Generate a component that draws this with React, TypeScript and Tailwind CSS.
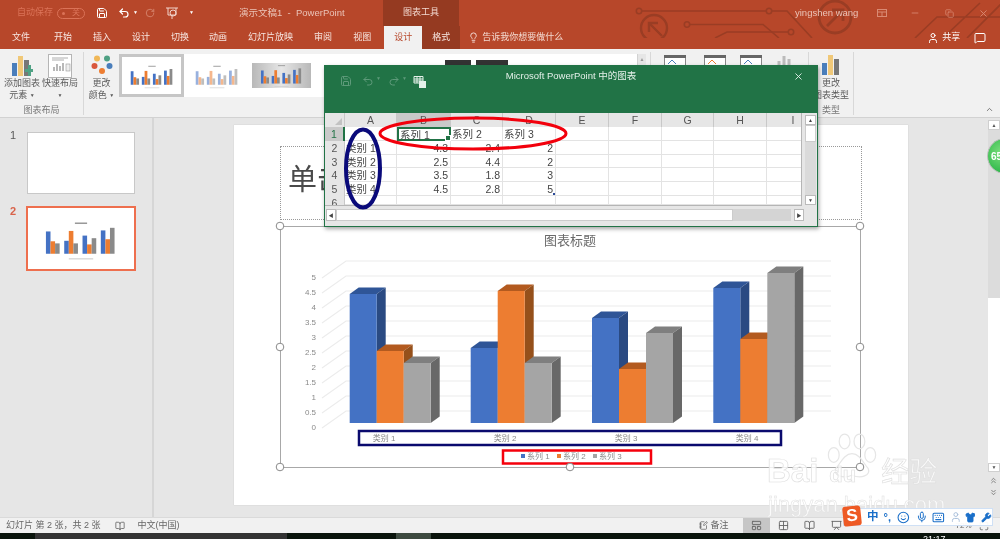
import React from "react";
import { Save, Undo2, Redo2, RotateCw, X, Lightbulb, User, MessageSquare, ChevronUp, Minus, Copy, Smile, Mic, Keyboard, Shirt, Wrench, ChevronsUp, ChevronsDown, NotebookPen, Grid2x2, BookOpen, Presentation, LayoutPanelTop, Maximize } from "lucide-react";

const BLUE = { f: "#4472C4", t: "#2F5597", s: "#2A4A82" };
const ORANGE = { f: "#ED7D31", t: "#B35A1F", s: "#95501B" };
const GRAY = { f: "#A5A5A5", t: "#7F7F7F", s: "#686868" };

function Bar3D({ x, v, c }: { x: number; v: number; c: { f: string; t: string; s: string } }) {
  const h = v * 30;
  const y = 423 - h;
  return (
    <g>
      <polygon points={`${x},${y} ${x + 9},${y - 6.5} ${x + 36},${y - 6.5} ${x + 27},${y}`} fill={c.t} />
      <polygon points={`${x + 27},${y} ${x + 36},${y - 6.5} ${x + 36},416.5 ${x + 27},423`} fill={c.s} />
      <rect x={x} y={y} width={27} height={h} fill={c.f} />
    </g>
  );
}

function Chart() {
  const groups = [
    { x: 350.7, v: [4.3, 2.4, 2], label: "类别 1", cx: 385 },
    { x: 471.7, v: [2.5, 4.4, 2], label: "类别 2", cx: 506 },
    { x: 593, v: [3.5, 1.8, 3], label: "类别 3", cx: 627 },
    { x: 714.3, v: [4.5, 2.8, 5], label: "类别 4", cx: 748 },
  ];
  const ticks = ["0", "0.5", "1", "1.5", "2", "2.5", "3", "3.5", "4", "4.5", "5"];
  const handles = [
    [281, 226], [861, 226], [281, 467], [861, 467], [281, 347], [861, 347], [571, 467],
  ];
  return (
    <svg viewBox="281 226 580 241" className="absolute -left-px -top-px w-[580px] h-[241px] overflow-visible">
      <text x={571} y={245} textAnchor="middle" fontSize={13} fill="#6A6A6A">图表标题</text>
      {ticks.map((t, i) => {
        const y = 411 - i * 15;
        return (
          <g key={t}>
            <polyline points={`323,${y + 17} 347,${y} 832,${y}`} fill="none" stroke="#ECECEC" strokeWidth={1.2} />
            <text x={317} y={y + 19} textAnchor="end" fontSize={8} fill="#8A8A8A">{t}</text>
          </g>
        );
      })}
      {groups.map((g) => (
        <g key={g.label}>
          <Bar3D x={g.x} v={g.v[0]} c={BLUE} />
          <Bar3D x={g.x + 27} v={g.v[1]} c={ORANGE} />
          <Bar3D x={g.x + 54} v={g.v[2]} c={GRAY} />
          <text x={g.cx} y={441} textAnchor="middle" fontSize={8} fill="#8A8A8A">{g.label}</text>
        </g>
      ))}
      <rect x={360} y={431} width={422} height={14} fill="none" stroke="#0A0A6E" strokeWidth={2.5} />
      <rect x={504} y={450.5} width={148} height={13} fill="none" stroke="#F5000C" strokeWidth={2.5} />
      <rect x={522} y={454} width={4} height={4} fill="#4472C4" />
      <text x={528} y={459} fontSize={8} fill="#8A8A8A">系列 1</text>
      <rect x={558} y={454} width={4} height={4} fill="#ED7D31" />
      <text x={564} y={459} fontSize={8} fill="#8A8A8A">系列 2</text>
      <rect x={594} y={454} width={4} height={4} fill="#A5A5A5" />
      <text x={600} y={459} fontSize={8} fill="#8A8A8A">系列 3</text>
      {handles.map(([x, y]) => (
        <circle key={`${x}-${y}`} cx={x} cy={y} r={3.8} fill="#fff" stroke="#8A8A8A" strokeWidth={1} />
      ))}
    </svg>
  );
}

function MiniChart({ hatch = false, className = "", viewBox = "0 0 60 40" }: { hatch?: boolean; className?: string; viewBox?: string }) {
  const data = [[4.3, 2.4, 2], [2.5, 4.4, 2], [3.5, 1.8, 3], [4.5, 2.8, 5]];
  const cols = ["#4472C4", "#ED7D31", "#8A8A8A"];
  return (
    <svg viewBox={viewBox} className={className}>
      <rect x={26} y={9.5} width={8} height={1} fill="#999" />
      {data.map((g, i) => (
        <g key={i} opacity={hatch ? 0.55 : 1}>
          {g.map((v, j) => (
            <rect key={j} x={7 + i * 12 + j * 3} y={30 - v * 3.4} width={3} height={v * 3.4} fill={cols[j]} />
          ))}
        </g>
      ))}
      <rect x={22} y={33} width={16} height={0.7} fill="#ccc" />
    </svg>
  );
}

function Tab({ children, className = "" }: { children: React.ReactNode; className?: string }) {
  return <div className={`px-[10.5px] flex items-center h-full ${className}`}>{children}</div>;
}

function Circuit() {
  return (
    <svg viewBox="635 0 365 38" className="absolute right-0 top-0 w-[365px] h-[38px]" fill="none" stroke="#9A3D24" strokeWidth={1.6}>
      <path d="M642 11H766M772 11H787L812 38" />
      <circle cx={639} cy={11} r={2.7} />
      <circle cx={769} cy={11} r={2.7} />
      <path d="M690 24.5H763L779 38" />
      <circle cx={687} cy={24.5} r={2.7} />
      <path d="M715 38L727 32H788" />
      <circle cx={791} cy={32} r={2.7} />
      <circle cx={654} cy={28} r={13} strokeWidth={2.4} />
      <path d="M662 36L650 24M649 32V23H658" strokeWidth={2.4} />
      <circle cx={835} cy={17} r={16} strokeWidth={2.8} />
      <path d="M827 26L842 11M832 10H843V21" strokeWidth={2.8} />
      <path d="M915 38L937 17H1000M943 38L980 3M967 38L1002 3" />
    </svg>
  );
}

function TitleBar() {
  return (
    <div className="relative h-[26px] flex items-center text-[#EBC4B8] text-[9px] shrink-0">
      <Circuit />
      <span className="ml-[17px] w-[36px] text-[#DB7358] whitespace-nowrap">自动保存</span>
      <span className="ml-[4px] w-[28px] h-[11px] rounded-full border border-[#DB7358] flex items-center justify-between px-[4px] text-[8px] text-[#DB7358]">
        <span className="w-[3px] h-[3px] rounded-full bg-[#DB7358]" />关
      </span>
      <Save size={12} strokeWidth={2} className="ml-[11px] text-white" />
      <Undo2 size={12} strokeWidth={2.4} className="ml-[10px] text-white" />
      <span className="ml-[3px] text-white text-[5px]">▼</span>
      <RotateCw size={10} className="ml-[7px] text-[#D98A73]" />
      <svg viewBox="0 0 14 14" className="ml-[10px] w-[14px] h-[14px]" fill="none" stroke="#F2D5CC" strokeWidth={1}>
        <path d="M1 2H13M3 2V9H11V2M7 9V13" />
        <circle cx={8} cy={7} r={3} />
      </svg>
      <span className="ml-[10px] text-white text-[5px]">▼</span>
      <span className="absolute left-[239px] text-[9.5px] whitespace-nowrap text-[#EBC4B8]">演示文稿1 &nbsp;-&nbsp; PowerPoint</span>
      <div className="absolute left-[383px] w-[76px] h-full bg-[#953A21] flex items-center justify-center text-[9px] text-[#F3D9D0]">图表工具</div>
      <span className="absolute left-[795px] text-[9.5px] text-[#EBC4B8] whitespace-nowrap">yingshen wang</span>
      <svg viewBox="0 0 10 8" className="absolute left-[877px] w-[10px] h-[8px]" fill="none" stroke="#D98A73"><rect x={0.5} y={0.5} width={9} height={7} /><path d="M0.5 3H9.5M5 3V7" /></svg>
      <Minus size={10} className="absolute left-[910px] text-[#D98A73]" />
      <Copy size={9} className="absolute left-[945px] text-[#D98A73]" />
      <X size={11} className="absolute left-[978px] text-[#D98A73]" />
    </div>
  );
}

function TabRow() {
  return (
    <div className="relative h-[23px] flex items-center text-[9px] text-[#F7E6E1] shrink-0">
      <Tab className="ml-[1.5px]">文件</Tab>
      <Tab className="ml-[3px]">开始</Tab>
      <Tab>插入</Tab>
      <Tab>设计</Tab>
      <Tab>切换</Tab>
      <Tab className="-ml-[1px]">动画</Tab>
      <Tab>幻灯片放映</Tab>
      <Tab>审阅</Tab>
      <Tab>视图</Tab>
      <div className="ml-[2.5px] w-[38px] h-full bg-[#F1F1F1] text-[#B7472A] flex items-center justify-center">设计</div>
      <div className="w-[38px] h-full bg-[#953A21] flex items-center justify-center">格式</div>
      <Lightbulb size={11} className="ml-[8px] text-[#F7E6E1]" />
      <span className="ml-[3px] text-[#F3D9D0] whitespace-nowrap">告诉我你想要做什么</span>
      <User size={12} className="ml-[364px] text-white" />
      <span className="ml-[3px] text-white">共享</span>
      <MessageSquare size={12} className="ml-[14px] text-white" />
    </div>
  );
}

function Sep() {
  return <div className="w-px h-[63px] mt-[3px] bg-[#D8D8D8] shrink-0" />;
}

function TopIcon({ c, className = "" }: { c: string; className?: string }) {
  return (
    <svg viewBox="0 0 22 12" className={`w-[22px] h-[12px] ${className}`}>
      <rect x={0.5} y={0.5} width={21} height={11} fill="#fff" stroke="#888" />
      <rect x={0} y={0} width={22} height={3} fill="#666" />
      <path d="M4 9L8 5L12 9" stroke={c} fill="none" />
    </svg>
  );
}

function Ribbon() {
  return (
    <div className="relative h-[69px] bg-[#F1F1F1] border-b border-[#D2D2D2] flex text-[9px] leading-[11px] text-[#5A5A5A] shrink-0">
      <div className="relative w-[83px] shrink-0">
        <div className="flex pt-[5px]">
          <div className="w-[42px] ml-[1px] flex flex-col items-center">
            <svg viewBox="0 0 22 23" className="w-[22px] h-[23px]">
              <rect x={1} y={9} width={5} height={13} fill="#4A7EBB" />
              <rect x={7} y={2} width={5} height={20} fill="#F0C878" />
              <rect x={13} y={6} width={5} height={16} fill="#777" />
              <path d="M17 11h3v4h3v3h-3v4h-3v-4h-3v-3h3z" fill="#4FA184" />
            </svg>
            <span className="mt-[1px]">添加图表</span>
            <span className="whitespace-nowrap mt-px">元素 <span className="text-[5px] align-middle">▼</span></span>
          </div>
          <div className="w-[36px] -ml-[1px] flex flex-col items-center">
            <svg viewBox="0 0 24 24" className="w-[24px] h-[24px]">
              <rect x={0.5} y={0.5} width={23} height={23} fill="#fff" stroke="#B5B5B5" />
              <path d="M4 4H20M4 6H16" stroke="#999" strokeWidth={0.8} />
              <path d="M6 17V13M9 17V10M12 17V12M15 17V9" stroke="#B8B8B8" strokeWidth={2} />
              <rect x={18} y={10} width={4} height={7} fill="#eee" stroke="#999" strokeWidth={0.6} />
            </svg>
            <span className="whitespace-nowrap">快速布局</span>
            <span className="text-[5px] mt-px">▼</span>
          </div>
        </div>
        <div className="absolute bottom-px left-0 w-full text-center text-[#787878]">图表布局</div>
      </div>
      <Sep />
      <div className="w-[35px] shrink-0 pt-[6px] flex flex-col items-center">
        <svg viewBox="0 0 22 20" className="w-[22px] h-[20px]">
          <circle cx={6} cy={3.5} r={3} fill="#F0B757" />
          <circle cx={16} cy={3.5} r={3} fill="#4FA184" />
          <circle cx={3.5} cy={11} r={3} fill="#D9573B" />
          <circle cx={18.5} cy={11} r={3} fill="#4A7EBB" />
          <circle cx={11} cy={16} r={3} fill="#ED7D31" />
        </svg>
        <span className="mt-[3px]">更改</span>
        <span className="whitespace-nowrap mt-px">颜色 <span className="text-[5px] align-middle">▼</span></span>
      </div>
      <div className="w-[518px] h-[43px] mt-[5px] bg-white flex shrink-0 items-center">
        <div className="w-[65px] h-full border-[3px] border-[#C6C6C6] bg-white flex items-center justify-center">
          <MiniChart className="w-[58px] h-[37px]" />
        </div>
        <MiniChart hatch className="ml-[3px] w-[60px] h-[37px]" />
        <div className="ml-[5px] w-[59px] h-[25px] bg-[linear-gradient(90deg,#B8B8B8,#E6E6E6,#B8B8B8)] flex items-center">
          <MiniChart viewBox="0 7 60 28" className="w-[59px] h-[25px]" />
        </div>
        <div className="ml-[134px] w-[26px] h-[30px] bg-[#333] self-start mt-[6px]" />
        <div className="ml-[5px] w-[32px] h-[30px] bg-[#333] self-start mt-[6px]" />
      </div>
      <div className="w-[9px] h-[43px] mt-[5px] bg-[#E6E6E6] border-l border-[#D2D2D2] shrink-0 text-[5px] text-center text-[#999]">▲</div>
      <div className="w-[4px] shrink-0" />
      <Sep />
      <div className="w-[157px] shrink-0 flex pt-[6px] pl-[13px]">
        <TopIcon c="#4A7EBB" />
        <TopIcon c="#ED7D31" className="ml-[18px]" />
        <TopIcon c="#4A7EBB" className="ml-[14px]" />
        <svg viewBox="0 0 18 12" className="ml-[14px] w-[18px] h-[12px]">
          <path d="M3 12V6M8 12V1M13 12V4" stroke="#BBB" strokeWidth={3} />
        </svg>
      </div>
      <Sep />
      <div className="relative w-[44px] shrink-0 flex flex-col items-center pt-[6px]">
        <svg viewBox="0 0 18 20" className="w-[18px] h-[20px]">
          <rect x={0} y={8} width={5} height={12} fill="#4A7EBB" />
          <rect x={6} y={0} width={5} height={20} fill="#F0C878" />
          <rect x={12} y={4} width={5} height={16} fill="#777" />
        </svg>
        <span className="mt-[3px]">更改</span>
        <span className="whitespace-nowrap mt-px">图表类型</span>
        <span className="absolute bottom-px text-[#787878]">类型</span>
      </div>
      <Sep />
      <ChevronUp size={9} className="absolute right-[6px] bottom-[3px] text-[#555]" />
    </div>
  );
}

function Thumbs() {
  return (
    <div className="w-[152px] shrink-0 bg-[#E6E6E6] border-r-2 border-[#D6D6D6] box-content pt-[14px] text-[11px]">
      <div className="flex">
        <span className="w-[27px] pl-[10px] text-[#5A5A5A] leading-[6px]">1</span>
        <div className="w-[108px] h-[62px] bg-white border border-[#C8C8C8]" />
      </div>
      <div className="flex mt-[12px]">
        <span className="w-[26px] pl-[10px] text-[#D9634A] leading-[10px] font-bold">2</span>
        <div className="w-[110px] h-[65px] bg-white border-2 border-[#EE6F4E] flex items-center justify-center">
          <MiniChart className="w-[96px] h-[61px]" />
        </div>
      </div>
    </div>
  );
}

function Slide() {
  return (
    <div className="ml-[80px] mt-[7px] w-[674px] h-[380px] bg-white pl-[46px] pt-[21px] shrink-0 shadow-[0_0_1px_#BBB]">
      <div className="w-[582px] h-[74px] border border-dotted border-[#999] pl-[7px] pt-[13px] text-[29px] leading-[40px] text-[#4A4A4A] whitespace-nowrap overflow-hidden">
        单击此处添加标题
      </div>
      <div className="relative mt-[6px] w-[581px] h-[242px] border border-[#A8A8A8]">
        <Chart />
      </div>
    </div>
  );
}

function VScroll() {
  return (
    <div className="w-[12px] shrink-0 flex flex-col items-stretch pt-[2px]">
      <div className="h-[10px] bg-white border border-[#CFCFCF] text-[5px] leading-[8px] text-center text-[#555]">▲</div>
      <div className="h-[333px] bg-[#DCDCDC] flex flex-col justify-end">
        <div className="h-[165px] bg-white" />
      </div>
      <div className="h-[9px] bg-white border border-[#CFCFCF] text-[5px] leading-[7px] text-center text-[#555]">▼</div>
      <ChevronsUp size={9} className="mt-[4px] ml-[1px] text-[#666]" />
      <ChevronsDown size={9} className="mt-[3px] ml-[1px] text-[#666]" />
    </div>
  );
}

function StatusBar() {
  return (
    <div className="relative h-[16px] bg-[#F1F1F1] border-t border-[#DADADA] flex items-center text-[9px] text-[#666] shrink-0">
      <span className="ml-[6px] whitespace-nowrap">幻灯片 第 2 张，共 2 张</span>
      <BookOpen size={10} className="ml-[14px]" />
      <span className="ml-[13px] whitespace-nowrap">中文(中国)</span>
      <NotebookPen size={9} className="ml-[519px]" />
      <span className="ml-[3px] whitespace-nowrap">备注</span>
      <div className="ml-[14px] w-[27px] h-full bg-[#C6C6C6] flex items-center justify-center">
        <LayoutPanelTop size={11} />
      </div>
      <Grid2x2 size={11} className="ml-[8px]" />
      <BookOpen size={11} className="ml-[15px]" />
      <Presentation size={11} className="ml-[16px]" />
      <span className="ml-[114px] text-[8px]">72%</span>
      <Maximize size={10} className="ml-[7px]" />
    </div>
  );
}

function BottomBar() {
  return (
    <div className="relative h-[6px] flex overflow-hidden shrink-0 bg-[#0A140C]">
      <div className="w-[35px]" />
      <div className="w-[252px] bg-[#333]" />
      <div className="w-[109px]" />
      <div className="w-[35px] bg-[#3D4A40]" />
      <span className="absolute left-[923px] top-[1px] text-[9px] leading-[10px] text-white">21:17</span>
    </div>
  );
}

function ExcelWindow() {
  const colW = ["A", "B", "C", "D", "E", "F", "G", "H", "I"];
  const rows: string[][] = [
    ["", "系列 1", "系列 2", "系列 3"],
    ["类别 1", "4.3", "2.4", "2"],
    ["类别 2", "2.5", "4.4", "2"],
    ["类别 3", "3.5", "1.8", "3"],
    ["类别 4", "4.5", "2.8", "5"],
    ["", "", "", ""],
  ];
  return (
    <div className="absolute left-[324px] top-[65px] w-[494px] h-[162px] border border-[#217346] bg-[#E6E6E6] shadow-[1px_2px_4px_rgba(0,0,0,0.35)]">
      <div className="h-[47px] bg-[#217346] relative flex items-start pt-[9px] pl-[15px] text-[#5E9A7A]">
        <Save size={12} />
        <Undo2 size={12} className="ml-[10px]" />
        <span className="ml-[2px] text-[5px]">▼</span>
        <Redo2 size={12} className="ml-[7px]" />
        <span className="ml-[2px] text-[5px]">▼</span>
        <svg viewBox="0 0 13 13" className="ml-[6px] w-[13px] h-[13px]" fill="none" stroke="#E4F0E9" strokeWidth={1}>
          <path d="M1 1.5H10V8H1zM1 4H10M1 6H10M4 2V8M7 2V8" />
          <rect x={6.5} y={6.5} width={6} height={6} fill="#E4F0E9" />
        </svg>
        <span className="absolute left-0 right-0 top-[3px] text-center text-[9.5px] text-[#E4F0E9] whitespace-nowrap">Microsoft PowerPoint 中的图表</span>
        <X size={11} className="absolute right-[13px] top-[5px] text-[#E4F0E9]" />
      </div>
      <div className="flex h-[93px]">
        <div className="w-[477px] shrink-0 grid grid-cols-[20px_52px_54px_52px_53px_53px_53px_52px_53px_53px] grid-rows-[14px_14px_14px_13px_14px_14px_9px] overflow-hidden text-[10.5px] leading-[15px] text-[#444] border-b border-r border-[#B5B5B5]">
          <div className="bg-[#E6E6E6] border-r border-[#C8C8C8] relative">
            <div className="absolute right-[2px] bottom-[2px] w-0 h-0 border-l-[7px] border-t-[7px] border-l-transparent border-t-transparent border-b-0 border-r-[7px] border-r-[#C2C2C2]" />
          </div>
          {colW.map((c) => (
            <div key={c} className={`${c === "B" ? "bg-[#C9C9C9]" : "bg-[#E6E6E6]"} border-r border-[#C8C8C8] text-center text-[#555]`}>{c}</div>
          ))}
          {rows.map((r, ri) => (
            <React.Fragment key={ri}>
              <div className={`${ri === 0 ? "bg-[#C9C9C9] text-[#217346] border-r-2 border-r-[#217346]" : "bg-[#E6E6E6] text-[#555] border-r border-r-[#C8C8C8]"} text-center`}>{ri + 1}</div>
              {colW.map((c, ci) => {
                const v = r[ci] ?? "";
                const textual = ri === 0 || ci === 0;
                const sel = ri === 0 && ci === 1;
                return (
                  <div key={c} className={`relative bg-white whitespace-nowrap overflow-visible ${sel ? "border-2 border-[#217346] pl-[1px] leading-[12px]" : "border-r border-b border-[#E3E3E3] pr-[2px] pl-[1px]"} ${textual ? "text-left" : "text-right"}`}>
                    {v}
                    {sel && <span className="absolute -right-[2px] -bottom-[2px] w-[4px] h-[4px] bg-[#217346] border border-white box-content" />}
                    {ri === 4 && ci === 3 && <span className="absolute right-0 bottom-0 w-[2px] h-[2px] bg-[#2A4A9A]" />}
                  </div>
                );
              })}
            </React.Fragment>
          ))}
        </div>
        <div className="w-[11px] ml-[3px] mt-[2px] flex flex-col bg-[#DADADA] h-[90px]">
          <div className="h-[10px] bg-white border border-[#BBB] text-[5px] leading-[8px] text-center text-[#444]">▲</div>
          <div className="h-[17px] bg-white border border-[#CCC]" />
          <div className="flex-1" />
          <div className="h-[10px] bg-white border border-[#BBB] text-[5px] leading-[8px] text-center text-[#444]">▼</div>
        </div>
      </div>
      <div className="flex items-center h-[16px] pl-[1px] pt-[1px]">
        <div className="w-[10px] h-[12px] bg-white border border-[#BBB] text-[5px] leading-[10px] text-center text-[#444]">◀</div>
        <div className="w-[397px] h-[12px] bg-white border border-[#CCC]" />
        <div className="w-[58px] h-[12px] bg-[#D4D4D4]" />
        <div className="ml-[3px] w-[10px] h-[12px] bg-white border border-[#BBB] text-[5px] leading-[10px] text-center text-[#444]">▶</div>
      </div>
      <svg viewBox="325 66 492 160" className="absolute inset-0 w-[492px] h-[160px] pointer-events-none" fill="none">
        <ellipse cx={473} cy={133.5} rx={93} ry={15.5} stroke="#F2000C" strokeWidth={3} />
        <ellipse cx={363} cy={168.5} rx={17} ry={39} stroke="#0A0A7A" strokeWidth={4} />
      </svg>
    </div>
  );
}

function Watermark() {
  return (
    <div className="absolute left-[760px] top-[400px] w-[190px] h-[115px] pointer-events-none">
      <svg viewBox="0 0 80 70" className="absolute left-[65px] top-[28px] w-[54px] h-[58px]" fill="none" stroke="#E6E6E6" strokeWidth={1.8}>
        <ellipse cx={13} cy={32} rx={8} ry={11} />
        <ellipse cx={29} cy={12} rx={8} ry={11} />
        <ellipse cx={51} cy={12} rx={8} ry={11} />
        <ellipse cx={67} cy={32} rx={8} ry={11} />
        <path d="M40 30C28 30 22 46 16 52C12 62 26 68 40 62C54 68 68 62 64 52C58 46 52 30 40 30Z" />
      </svg>
      <div className="absolute left-[7px] top-[53px] flex items-baseline text-[33px] leading-[36px] font-bold text-white/80 whitespace-nowrap [-webkit-text-stroke:0.7px_#E0E0E0]">
        Bai<span className="ml-[11px] text-[22px]">du</span>
        <span className="ml-[25px] text-[28px] font-normal">经验</span>
      </div>
      <div className="absolute left-[8px] top-[93px] text-[22px] leading-[24px] text-white/80 whitespace-nowrap [-webkit-text-stroke:0.5px_#E0E0E0]">jingyan.baidu.com</div>
    </div>
  );
}

function Sogou() {
  return (
    <div className="absolute left-[843px] top-[508px] w-[150px] h-[18px] bg-white/95 border border-[#CFE0F5] flex items-center text-[#1A6FC9]">
      <div className="absolute -left-[1px] -top-[3px] w-[18px] h-[20px] bg-[#EE5A24] rounded-[3px] text-white font-bold text-[17px] leading-[19px] text-center rotate-[-6deg]">S</div>
      <span className="ml-[23px] text-[11.5px] font-bold">中</span>
      <span className="ml-[5px] text-[11px] font-bold leading-[10px]">°,</span>
      <Smile size={13} className="ml-[6px]" />
      <Mic size={12} className="ml-[6px]" />
      <Keyboard size={13} className="ml-[5px]" />
      <User size={12} className="ml-[5px] text-[#A8BEDA]" />
      <Shirt size={11} fill="#1A6FC9" className="ml-[3px]" />
      <Wrench size={11} fill="#1A6FC9" className="ml-[6px]" />
    </div>
  );
}

export default function App() {
  return (
    <div className="relative w-[1000px] h-[539px] overflow-hidden flex flex-col bg-[#E6E6E6] blur-[0.35px] font-['Liberation_Sans','Noto_Sans_CJK_SC',sans-serif]">
      <div className="bg-[#B7472A] shrink-0 relative">
        <TitleBar />
        <TabRow />
      </div>
      <Ribbon />
      <div className="flex flex-1 min-h-0">
        <Thumbs />
        <div className="flex-1 min-w-0">
          <Slide />
        </div>
        <VScroll />
      </div>
      <StatusBar />
      <BottomBar />
      <ExcelWindow />
      <Watermark />
      <div className="absolute left-[987px] top-[138px] w-[36px] h-[36px] rounded-full border border-[#BDBDBD] bg-[radial-gradient(circle_at_40%_40%,#7FE07F,#2FB84A_70%,#1E9A38)] flex items-center pl-[3px] text-[10px] font-bold text-white">65</div>
      <Sogou />
    </div>
  );
}
